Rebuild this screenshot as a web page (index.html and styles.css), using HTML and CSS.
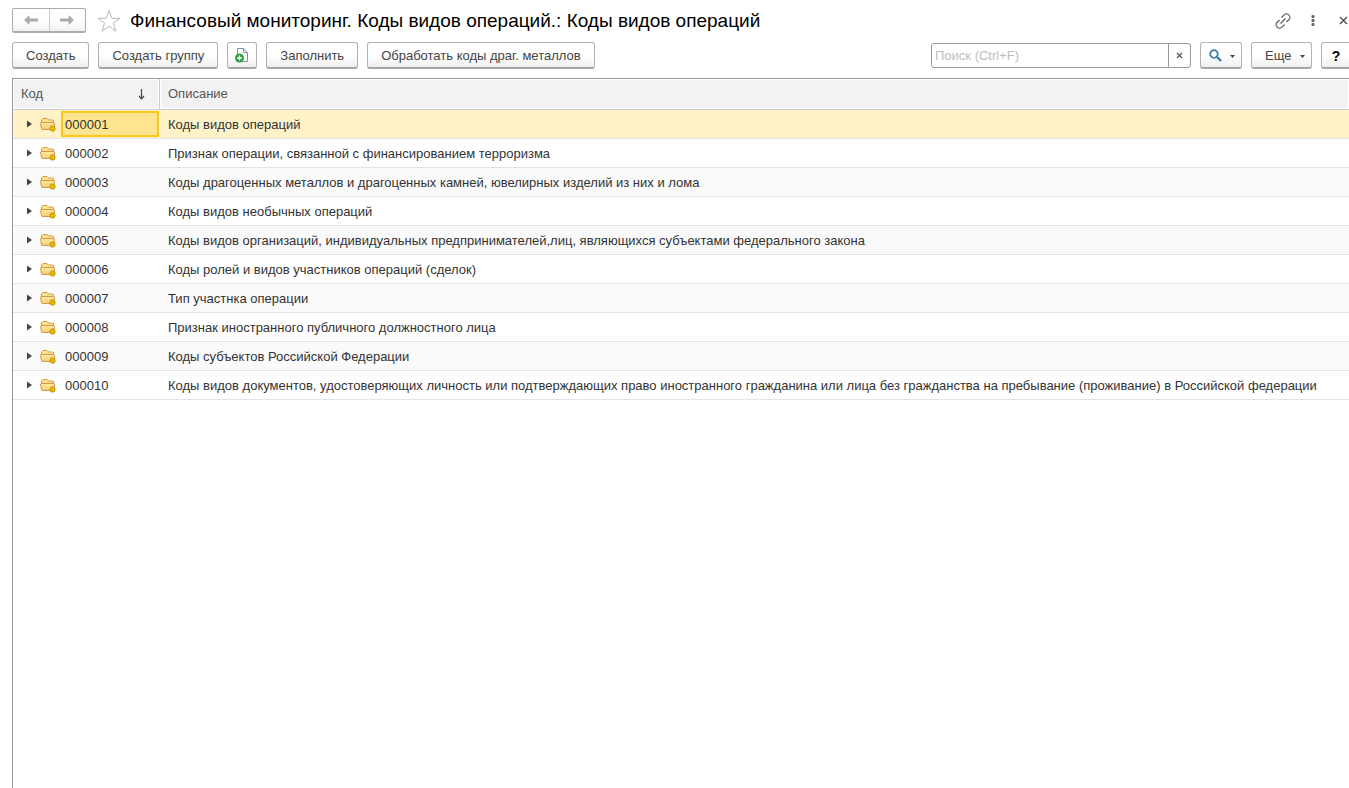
FILE: index.html
```html
<!DOCTYPE html>
<html lang="ru">
<head>
<meta charset="utf-8">
<title>Коды видов операций</title>
<link rel="stylesheet" href="styles.css">
</head>
<body>
<svg class="sprite" aria-hidden="true">
  <defs>
    <linearGradient id="gold" x1="0" y1="0" x2="0" y2="1"><stop offset="0" stop-color="#ffe9a3"/><stop offset="1" stop-color="#f6cc6c"/></linearGradient>
    <symbol id="folder" viewBox="0 0 16 16">
      <path d="M1.500 12.500V4l1.500-1.500h4L8.500 4H13l.5 .5V7" fill="#ffe28b" stroke="#cf9a50"/>
      <path d="M.5 7l.5-.5h13l.5.500-.5 6-.5.500H2l-.5-.5z" fill="url(#gold)" stroke="#cf9a50"/>
      <circle cx="12.500" cy="12.500" r="2.700" fill="#e6b800" stroke="#bd9110" stroke-width=".8"/>
    </symbol>
    <symbol id="expand" viewBox="0 0 5 8"><path d="M0 0.500L5 4 0 7.500z" fill="#444"/></symbol>
  </defs>
</svg>
<main class="window">
  <header class="titlebar">
    <div class="history">
      <button class="history-btn" aria-label="Назад"><svg width="14" height="10" viewBox="0 0 14 10"><path d="M0 5l5.500-5v3.500H14v3H5.500V10z" fill="#aaa"/></svg></button>
      <button class="history-btn" aria-label="Вперед"><svg width="14" height="10" viewBox="0 0 14 10"><path d="M14 5L8.500 0v3.500H0v3h8.500V10z" fill="#aaa"/></svg></button>
    </div>
    <button class="icon-btn star" aria-label="В избранное"><svg width="24" height="24" viewBox="0 0 24 24"><path d="M12 1.500l2.700 7.800H23l-6.600 4.900 2.500 7.900L12 17.300l-6.900 4.800 2.500-7.900L1 9.300h8.300z" fill="#fff" stroke="#b4bac2"/></svg></button>
    <h1 class="title">Финансовый мониторинг. Коды видов операций.: Коды видов операций</h1>
    <div class="window-tools">
      <button class="icon-btn" aria-label="Ссылка"><svg width="16" height="16" viewBox="0 0 16 16" fill="none" stroke="#555" stroke-width="1.100"><path d="M6.500 4.500l2.800-2.800a2.900 2.900 0 0 1 4.200 0l.6.6a2.900 2.900 0 0 1 0 4.200L11.500 9M9.500 11.500l-2.800 2.800a2.900 2.900 0 0 1-4.200 0l-.6-.6a2.900 2.900 0 0 1 0-4.200L4.500 7M5.500 10.500l5-5"/></svg></button>
      <button class="icon-btn" aria-label="Меню"><svg width="4" height="12" viewBox="0 0 4 12" fill="#666"><rect x=".5" y="0" width="3" height="3" rx="1"/><rect x=".5" y="4" width="3" height="3" rx="1"/><rect x=".5" y="8" width="3" height="3" rx="1"/></svg></button>
      <button class="icon-btn" aria-label="Закрыть"><svg width="9" height="9" viewBox="0 0 9 9"><path d="M1 1l7 7M8 1L1 8" stroke="#444" stroke-width="1.200"/></svg></button>
    </div>
  </header>
  <div class="toolbar">
    <button class="btn">Создать</button>
    <button class="btn">Создать группу</button>
    <button class="btn btn-icon" aria-label="Создать копированием"><svg width="16" height="16" viewBox="0 0 16 16"><path d="M3.500 9V1.500h6l4 4v9H8" fill="#fff" stroke="#7f92a5"/><path d="M9.500 1.500v4h4" fill="none" stroke="#7f92a5"/><circle cx="5.500" cy="11" r="4.500" fill="#2f9e3f"/><path d="M5.500 8.500v5M3 11h5" stroke="#fff" stroke-width="1.400"/></svg></button>
    <button class="btn">Заполнить</button>
    <button class="btn">Обработать коды драг. металлов</button>
    <div class="search">
      <input class="search-input" type="text" aria-label="Поиск" placeholder="Поиск (Ctrl+F)">
      <button class="search-clear" aria-label="Очистить"><svg width="7" height="7" viewBox="0 0 7 7"><path d="M1 1l5 5M6 1L1 6" stroke="#555" stroke-width="1.200"/></svg></button>
    </div>
    <button class="btn btn-find" aria-label="Найти"><svg width="13" height="13" viewBox="0 0 13 13" fill="none" stroke="#3b80ad"><circle cx="5" cy="5" r="3.800" stroke-width="1.800"/><path d="M8 8l4 4" stroke-width="2.400"/></svg><svg class="caret" width="5" height="3" viewBox="0 0 5 3"><path d="M0 0h5L2.500 3z" fill="#444"/></svg></button>
    <button class="btn btn-more">Еще<svg class="caret" width="5" height="3" viewBox="0 0 5 3"><path d="M0 0h5L2.500 3z" fill="#444"/></svg></button>
    <button class="btn btn-help" aria-label="Справка">?</button>
  </div>
  <div class="list">
    <table class="grid">
      <thead><tr><th class="col-code"><div class="head">Код<svg width="7" height="11" viewBox="0 0 7 11"><path d="M3.500 0v9M1 7l2.500 2.800L6 7" fill="none" stroke="#444" stroke-width="1.200"/></svg></div></th><th>Описание</th></tr></thead>
      <tbody>
        <tr class="selected"><td><div class="code"><svg class="expand"><use href="#expand"/></svg><svg class="folder"><use href="#folder"/></svg><span class="value">000001</span></div></td><td>Коды видов операций</td></tr>
        <tr><td><div class="code"><svg class="expand"><use href="#expand"/></svg><svg class="folder"><use href="#folder"/></svg><span class="value">000002</span></div></td><td>Признак операции, связанной с финансированием терроризма</td></tr>
        <tr><td><div class="code"><svg class="expand"><use href="#expand"/></svg><svg class="folder"><use href="#folder"/></svg><span class="value">000003</span></div></td><td>Коды драгоценных металлов и драгоценных камней, ювелирных изделий из них и лома</td></tr>
        <tr><td><div class="code"><svg class="expand"><use href="#expand"/></svg><svg class="folder"><use href="#folder"/></svg><span class="value">000004</span></div></td><td>Коды видов необычных операций</td></tr>
        <tr><td><div class="code"><svg class="expand"><use href="#expand"/></svg><svg class="folder"><use href="#folder"/></svg><span class="value">000005</span></div></td><td>Коды видов организаций, индивидуальных предпринимателей,лиц, являющихся субъектами федерального закона</td></tr>
        <tr><td><div class="code"><svg class="expand"><use href="#expand"/></svg><svg class="folder"><use href="#folder"/></svg><span class="value">000006</span></div></td><td>Коды ролей и видов участников операций (сделок)</td></tr>
        <tr><td><div class="code"><svg class="expand"><use href="#expand"/></svg><svg class="folder"><use href="#folder"/></svg><span class="value">000007</span></div></td><td>Тип участнка операции</td></tr>
        <tr><td><div class="code"><svg class="expand"><use href="#expand"/></svg><svg class="folder"><use href="#folder"/></svg><span class="value">000008</span></div></td><td>Признак иностранного публичного должностного лица</td></tr>
        <tr><td><div class="code"><svg class="expand"><use href="#expand"/></svg><svg class="folder"><use href="#folder"/></svg><span class="value">000009</span></div></td><td>Коды субъектов Российской Федерации</td></tr>
        <tr><td><div class="code"><svg class="expand"><use href="#expand"/></svg><svg class="folder"><use href="#folder"/></svg><span class="value">000010</span></div></td><td>Коды видов документов, удостоверяющих личность или подтверждающих право иностранного гражданина или лица без гражданства на пребывание (проживание) в Российской федерации</td></tr>
      </tbody>
    </table>
  </div>
</main>
</body>
</html>
```
FILE: styles.css
```css
* { box-sizing: border-box; }
body {
  margin: 0;
  background: #fff;
  color: #333;
  font: 13px/16px "Liberation Sans", Arial, sans-serif;
  overflow: hidden;
}
button, input { font: inherit; color: inherit; margin: 0; }
svg { display: block; flex: none; }
.sprite { position: absolute; width: 0; height: 0; }
.window {
  display: flex;
  flex-direction: column;
  height: 100vh;
  padding: 8px 0 0 12px;
}

.titlebar { display: flex; align-items: center; height: 25px; }
.history {
  display: flex;
  width: 74px;
  height: 25px;
  border: 1px solid #ababab;
  border-bottom-width: 2px;
  border-radius: 2px;
  background: linear-gradient(#fff 50%, #f0f0f0);
}
.history-btn {
  display: flex;
  flex: 1;
  align-items: center;
  justify-content: center;
  padding: 0;
  border: 0;
  background: none;
}
.history-btn + .history-btn { border-left: 1px solid #ccc; }
.icon-btn { padding: 0; border: 0; background: none; }
.star { margin-left: 11px; }
.title {
  margin: 0 0 0 9px;
  color: #000;
  font-size: 19px;
  font-weight: 400;
  line-height: 24px;
  white-space: nowrap;
}
.window-tools {
  display: flex;
  align-items: center;
  gap: 20px;
  margin-left: auto;
}
.window-tools .icon-btn:last-child { padding: 0 1px 0 4px; }

.toolbar { display: flex; gap: 9px; margin: 9px -2px 9px 0; }
.btn {
  display: flex;
  flex: none;
  align-items: center;
  justify-content: center;
  height: 27px;
  padding: 1px 13px 0;
  border: 1px solid #b3b3b3;
  border-bottom: 2px solid #a6a6a6;
  border-radius: 3px;
  background: linear-gradient(#fff 50%, #efefef);
  color: #444;
  white-space: nowrap;
}
.btn-icon { width: 30px; padding: 0; }
.search {
  display: flex;
  width: 260px;
  height: 25px;
  margin: 1px 0 0 auto;
  border: 1px solid #999;
  border-radius: 3px;
  background: #fff;
}
.search-input {
  flex: 1;
  min-width: 0;
  padding: 0 3px;
  border: 0;
  background: none;
  outline: 0;
}
.search-input::placeholder { color: #bdbdbd; opacity: 1; }
.search-clear {
  display: flex;
  align-items: center;
  justify-content: center;
  width: 22px;
  padding: 0;
  border: 0;
  border-left: 1px solid #999;
  background: none;
}
.btn-find { width: 42px; padding: 0 6px 0 8px; justify-content: space-between; }
.btn-more { width: 61px; padding: 1px 6px 0 13px; justify-content: space-between; }
.caret { margin-top: 2px; }
.btn-help { width: 30px; padding: 1px 0 0; color: #000; font-size: 14px; font-weight: 700; }

.list {
  flex: 1;
  border-top: 1px solid #999;
  border-left: 1px solid #999;
}
.grid {
  width: 100%;
  border-collapse: separate;
  border-spacing: 0;
  table-layout: fixed;
}
.grid th {
  height: 31px;
  padding: 0 8px;
  border-bottom: 1px solid #ccc;
  background: #f2f2f2;
  box-shadow: inset 0 0 0 1px #fff;
  color: #555;
  font-weight: 400;
  text-align: left;
}
.grid .col-code { width: 147px; border-right: 1px solid #ccc; }
.head { display: flex; align-items: center; justify-content: space-between; padding-right: 6px; }
.grid td {
  height: 29px;
  padding: 2px 8px 0;
  border-bottom: 1px solid #e4e4e4;
  white-space: nowrap;
}
.grid td:first-child { padding: 0 1px 0 14px; }
.grid tbody tr:nth-child(odd) { background: #fafafa; }
.grid tbody tr.selected { background: #fff2c9; }
.code { display: flex; align-items: center; }
.expand { width: 5px; height: 8px; }
.folder { width: 16px; height: 16px; margin: 0 5px 0 8px; }
.value {
  flex: 1;
  height: 26px;
  padding: 4px 2px 2px;
  border: 2px solid transparent;
}
.selected .value { border-color: #fac81e; background: #ffe48f; }
```
